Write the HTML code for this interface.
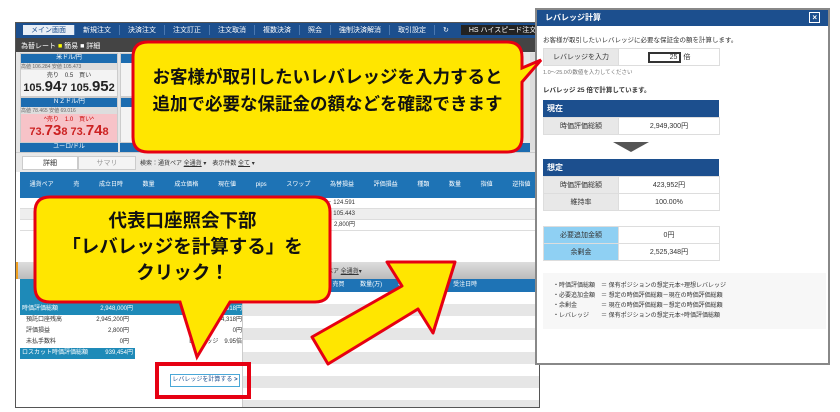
<!DOCTYPE html>
<html><head><meta charset="utf-8"><style>
*{margin:0;padding:0;box-sizing:border-box}
body{width:840px;height:412px;background:#fff;position:relative;overflow:hidden;font-family:"Liberation Sans","Noto Sans CJK JP",sans-serif;font-size:7px;color:#333}
.a{position:absolute}
.nav{left:15px;top:22px;width:525px;height:16px;background:#1c4f8e;color:#fff;font-size:7px;display:flex;align-items:center}
.nav span{padding:0 8px;border-right:1px solid #4a78b0;white-space:nowrap}
.nav span.on{background:#e8eef6;color:#1c4f8e;margin-left:8px}
.bar2{left:15px;top:38px;width:525px;height:14px;background:#444;color:#fff}
.rp{background:#f3f3f3;border:1px solid #ccc;overflow:hidden;white-space:nowrap}
.rh{background:#1c6cb0;color:#fff;height:9px;text-align:center;font-size:6px;line-height:9px}
.big{font-size:11px;font-weight:bold;color:#222;text-align:center;line-height:16px}
.big b{font-size:15px}
.th{background:#1e73b5;color:#fff;font-size:6px;text-align:center}
.row{border-bottom:1px solid #ddd;height:11px;font-size:6px;line-height:11px}
.cb{font-weight:bold;color:#111;text-align:center;white-space:nowrap}
.pop{left:535px;top:8px;width:295px;height:357px;border:2px solid #888;background:#fff}
.pt{height:16px;background:#1c4f8e;color:#fff;font-weight:bold;font-size:8px;padding:2px 8px}
table{border-collapse:collapse}
.pop td{border:1px solid #ddd;height:17px;font-size:7px;text-align:center}
.g{background:#e8e8e8;width:75px}
.lb{background:#8fd0f3;width:75px}
.sh{background:#1c4f8e;color:#fff;font-weight:bold;font-size:8px;height:17px;padding:3px 4px;width:176px}
</style></head><body>
<div class="a nav"><span class="on">メイン画面</span><span>新規注文</span><span>決済注文</span><span>注文訂正</span><span>注文取消</span><span>複数決済</span><span>照会</span><span>強制決済解消</span><span>取引設定</span><span style="border:0">↻</span><span style="background:#222;border:0;margin-left:4px">HS ハイスピード注文</span></div>
<div class="a bar2"><span style="padding:3px 6px;display:inline-block">為替レート <span style="color:#ff0">■</span> 簡易 ■ 詳細</span></div>
<div class="a" style="left:15px;top:52px;width:525px;height:100px;background:#e6e6e6"></div>
<div class="a rp" style="left:20px;top:53px;width:98px;height:44px"><div class="rh">米ドル/円</div><div style="font-size:5px;color:#666;background:#ddd">高値 106.284 安値 105.473</div><div style="font-size:6px;text-align:center">売り　0.5　買い</div><div class="big">105.<b>94</b>7 105.<b>95</b>2</div></div>
<div class="a rp" style="left:20px;top:97px;width:98px;height:46px;background:#f7c3c8"><div class="rh">ＮＺドル/円</div><div style="font-size:5px;color:#666;background:#ddd">高値 78.465 安値 69.016</div><div style="font-size:6px;color:#c00;text-align:center">^売り　1.0　買い^</div><div class="big" style="color:#c22">73.<b>73</b>8 73.<b>74</b>8</div></div>
<div class="a rh" style="left:20px;top:143px;width:98px">ユーロ/ドル</div>
<div class="a rp" style="left:120px;top:53px;width:98px;height:44px"><div class="rh"></div></div>
<div class="a rp" style="left:120px;top:97px;width:98px;height:46px"><div class="rh"></div></div>
<div class="a rh" style="left:120px;top:143px;width:410px"></div>
<div class="a" style="left:530px;top:53px;width:8px;height:97px;background:#ddd"></div>
<div class="a" style="left:15px;top:152px;width:525px;height:20px;background:#e9e9e9;border-top:1px solid #ccc"></div>
<div class="a" style="left:22px;top:156px;width:56px;height:14px;background:#fff;border:1px solid #ccc;text-align:center;line-height:13px">詳細</div>
<div class="a" style="left:78px;top:156px;width:58px;height:14px;background:#f4f4f4;border:1px solid #ccc;text-align:center;line-height:13px;color:#999">サマリ</div>
<div class="a" style="left:140px;top:158px;font-size:6px">検索：通貨ペア <u>全通貨</u> ▾　表示件数 <u>全て</u> ▾</div>
<div class="a th" style="left:20px;top:172px;width:520px;height:26px;line-height:26px;word-spacing:18px">通貨ペア 売 成立日時 数量 成立価格 現在値 pips スワップ 為替損益 評価損益 種類 数量 指値 逆指値 決済・訂正・取消</div>
<div class="a row" style="left:20px;top:198px;width:520px;text-align:right;padding-right:185px">2,400円　逆指 15.0 － 124.591</div>
<div class="a row" style="left:20px;top:209px;width:520px;background:#eee;text-align:right;padding-right:185px">400円　逆指 10.0 － 105.443</div>
<div class="a row" style="left:20px;top:220px;width:520px;text-align:right;padding-right:185px">2,800円</div>
<div class="a" style="left:15px;top:262px;width:525px;height:17px;background:linear-gradient(#ddd,#bbb);border-left:3px solid #f0a020"></div>
<div class="a" style="left:315px;top:266px;font-size:6px">通貨ペア <u>全通貨</u>▾</div>
<div class="a th" style="left:242px;top:279px;width:298px;height:13px;line-height:13px;word-spacing:14px">ペア 売買 数量(万) 種類 期限 受注日時</div>
<div class="a" style="left:20px;top:279px;width:222px;height:25px;background:#1e8ab8"></div>
<div class="a" style="left:242px;top:292px;width:298px;height:116px;background:repeating-linear-gradient(#fff 0 12px,#e6e6e6 12px 24px);border-left:1px solid #ccc"></div>
<div class="a" style="left:20px;top:304px;width:222px;height:60px;font-size:6px;line-height:11px">
<div style="background:#1e8ab8;color:#fff;display:flex;justify-content:space-between;width:115px;padding:0 2px"><span>時価評価総額</span><span>2,948,000円</span></div>
<div style="display:flex;justify-content:space-between;width:115px;padding:0 6px"><span>預託口座残高</span><span>2,945,200円</span></div>
<div style="display:flex;justify-content:space-between;width:115px;padding:0 6px"><span>評価損益</span><span>2,800円</span></div>
<div style="display:flex;justify-content:space-between;width:115px;padding:0 6px"><span>未払手数料</span><span>0円</span></div>
<div style="background:#1e8ab8;color:#fff;display:flex;justify-content:space-between;width:115px;padding:0 2px"><span>ロスカット時価評価総額</span><span>939,454円</span></div>
</div>
<div class="a" style="left:135px;top:304px;width:107px;font-size:6px;line-height:11px;text-align:right">
<div style="background:#1e8ab8;color:#fff">1,174,318円</div><div>1,174,318円</div><div>0円</div><div>レバレッジ　9.95倍</div></div>
<div class="a" style="left:15px;top:22px;width:525px;height:386px;border:1px solid #555"></div>
<div class="a" style="left:170px;top:374px;width:70px;height:13px;border:1px solid #4aa8d8;font-size:6px;text-align:center;line-height:11px;color:#1c4f8e">レバレッジを計算する <b>&gt;</b></div>
<div class="a" style="left:155px;top:362px;width:96px;height:37px;border:4px solid #e60012"></div>

<div class="a pop"><div class="pt">レバレッジ計算<span style="float:right;border:1px solid #fff;padding:0 2px">×</span></div>
<div style="padding:8px 6px 0;font-size:6.5px">お客様が取引したいレバレッジに必要な保証金の額を計算します。</div>
<table style="margin:4px 6px 0"><tr><td class="g">レバレッジを入力</td><td style="width:101px"><span style="border:2px solid #333;padding:0 2px 0 20px">25</span> 倍</td></tr></table>
<div style="padding:2px 6px;font-size:5.5px;color:#777">1.0〜25.0の数値を入力してください</div>
<div style="padding:6px 6px 6px;font-size:6.5px;font-weight:bold">レバレッジ 25 倍で計算しています。</div>
<div style="margin:0 6px"><div class="sh">現在</div>
<table><tr><td class="g">時価評価総額</td><td style="width:101px">2,949,300円</td></tr></table>
<div style="margin:7px 0 7px 70px;width:0;height:0;border-left:18px solid transparent;border-right:18px solid transparent;border-top:10px solid #555"></div>
<div class="sh">想定</div>
<table><tr><td class="g">時価評価総額</td><td style="width:101px">423,952円</td></tr><tr><td class="g">維持率</td><td>100.00%</td></tr></table>
<table style="margin-top:15px"><tr><td class="lb">必要追加金額</td><td style="width:101px">0円</td></tr><tr><td class="lb">余剰金</td><td>2,525,348円</td></tr></table>
<div style="margin-top:12px;background:#f7f7f7;padding:8px 10px;font-size:6px;line-height:10px;width:283px">・時価評価総額　＝ 保有ポジションの想定元本÷理想レバレッジ<br>・必要追加金額　＝ 想定の時価評価総額－現在の時価評価総額<br>・余剰金　　　　＝ 現在の時価評価総額－想定の時価評価総額<br>・レバレッジ　　＝ 保有ポジションの想定元本÷時価評価総額</div>
</div></div>

<svg class="a" style="left:0;top:0" width="840" height="412">
<path d="M148,42 H507 Q522,42 522,57 V68 L541,60 L522,82 V137 Q522,152 507,152 H148 Q133,152 133,137 V57 Q133,42 148,42Z" fill="#ffe600" stroke="#e60012" stroke-width="3"/>
<path d="M50,197 H315 Q330,197 330,212 V287 Q330,302 315,302 H230 L197,357 L180,302 H50 Q35,302 35,287 V212 Q35,197 50,197Z" fill="#ffe600" stroke="#e60012" stroke-width="3"/>
<polygon points="312,337 402,286 387,262 455,262 433,333 418,309 328,364" fill="#ffe600" stroke="#e60012" stroke-width="3" stroke-linejoin="round"/>
</svg>
<div class="a cb" style="left:133px;top:64px;width:389px;font-size:17.5px;line-height:27px">お客様が取引したいレバレッジを入力すると<br>追加で必要な保証金の額などを確認できます</div>
<div class="a cb" style="left:35px;top:208px;width:295px;font-size:18.5px;line-height:26px">代表口座照会下部<br>「レバレッジを計算する」を<br>クリック！</div>
</body></html>
